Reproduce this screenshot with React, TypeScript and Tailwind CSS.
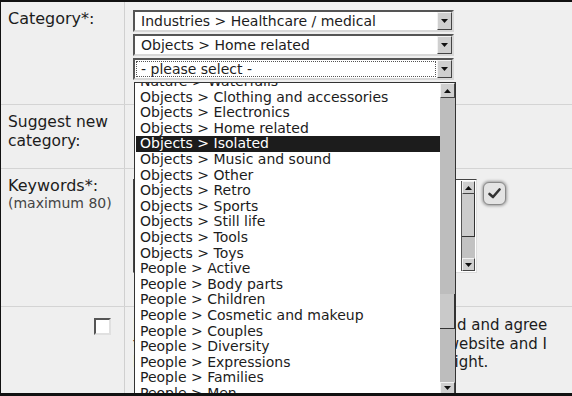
import React from 'react';

const items = [
  'Nature > Waterfalls',
  'Objects > Clothing and accessories',
  'Objects > Electronics',
  'Objects > Home related',
  'Objects > Isolated',
  'Objects > Music and sound',
  'Objects > Other',
  'Objects > Retro',
  'Objects > Sports',
  'Objects > Still life',
  'Objects > Tools',
  'Objects > Toys',
  'People > Active',
  'People > Body parts',
  'People > Children',
  'People > Cosmetic and makeup',
  'People > Couples',
  'People > Diversity',
  'People > Expressions',
  'People > Families',
  'People > Men',
  'People > Seniors',
];

const font = "font-['DejaVu_Sans','Verdana',sans-serif]";

function ArrowButton({ up = false, className = '' }: { up?: boolean; className?: string }) {
  return (
    <div
      className={`flex items-center justify-center bg-[#cfcfcf] border border-t-[#f2f2f2] border-l-[#f2f2f2] border-r-[#444] border-b-[#444] ${className}`}
    >
      <svg width="7" height="4" viewBox="0 0 7 4">
        {up ? <polygon points="0,4 7,4 3.5,0" fill="#111" /> : <polygon points="0,0 7,0 3.5,4" fill="#111" />}
      </svg>
    </div>
  );
}

function Select({ value, focused = false }: { value: string; focused?: boolean }) {
  return (
    <div className="flex h-[22px] w-[321px] border-2 border-t-[#555] border-l-[#555] border-r-[#d8d8d8] border-b-[#d8d8d8] bg-white">
      <div className="flex-1 p-[1px]">
        <div
          className={`h-full pl-[5px] text-[14px] leading-[16px] text-[#1c1c1c] whitespace-nowrap ${
            focused ? 'outline-1 outline-dotted outline-[#555] -outline-offset-1' : ''
          }`}
        >
          {value}
        </div>
      </div>
      <ArrowButton className="w-[15px] h-[18px]" />
    </div>
  );
}

function Dropdown() {
  return (
    <div className="absolute left-[133px] top-[80px] w-[322px] h-[313px] border border-[#333] bg-white flex overflow-hidden">
      <div className="flex-1 overflow-hidden pl-[1px]">
        <div className="-mt-[9px]">
          {items.map((item) => (
            <div
              key={item}
              className={`h-[15.6px] pl-[4px] text-[14px] leading-[15.6px] whitespace-nowrap ${
                item === 'Objects > Isolated' ? 'bg-[#1c1c1c] text-white' : 'text-[#1c1c1c]'
              }`}
            >
              {item}
            </div>
          ))}
        </div>
      </div>
      <div className="w-[15px] bg-[#bdbdbd] flex flex-col">
        <ArrowButton up className="h-[15px]" />
        <div className="h-[196px]" />
        <div className="h-[35px] bg-[#c9c9c9] border-r border-b border-[#333]" />
        <div className="flex-1" />
        <ArrowButton className="h-[12px]" />
      </div>
    </div>
  );
}

export default function App() {
  return (
    <div className={`relative w-[572px] h-[396px] overflow-hidden bg-[#efefef] border-t-2 border-l border-b-[3px] border-[#111] ${font} text-[#1c1c1c]`}>
      {/* Category */}
      <div className="flex h-[103px] border-b border-[#d4d4d4]">
        <div className="w-[124px] border-r border-[#d0d0d0] pl-[7px] pt-[7px] text-[16px] leading-[20px]">Category*:</div>
        <div className="flex-1 pl-[8px] pt-[8px] flex flex-col gap-[2px]">
          <Select value="Industries > Healthcare / medical" />
          <Select value="Objects > Home related" />
          <Select value="- please select -" focused />
        </div>
      </div>

      {/* Suggest */}
      <div className="flex h-[64px] border-b border-[#d4d4d4]">
        <div className="w-[124px] border-r border-[#d0d0d0] pl-[7px] pt-[8px] text-[15.5px] leading-[19px]">
          Suggest new category:
        </div>
        <div className="flex-1" />
      </div>

      {/* Keywords */}
      <div className="flex h-[138px] border-b border-[#d4d4d4]">
        <div className="w-[124px] border-r border-[#d0d0d0] pl-[7px] pt-[7px]">
          <div className="text-[16px] leading-[20px]">Keywords*:</div>
          <div className="text-[14px] leading-[15px] text-[#444]">(maximum 80)</div>
        </div>
        <div className="flex-1 pl-[8px] pt-[10px] flex items-start gap-[6px]">
          <div className="w-[344px] h-[94px] bg-white border border-t-[#444] border-l-[#444] border-r-[#ddd] border-b-[#ddd] flex justify-end">
            <div className="w-[14px] mr-[1px] mt-[1px] mb-[1px] bg-[#c2c2c2] border-l border-[#555] flex flex-col">
              <ArrowButton up className="h-[13px]" />
              <div className="h-[43px] bg-[#cccccc] border-b border-r border-[#333]" />
              <div className="flex-1" />
              <ArrowButton className="h-[13px]" />
            </div>
          </div>
          <button className="mt-[3px] w-[23px] h-[23px] rounded-[6px] bg-[#e4e4e4] border border-[#8a8a8a] shadow-[0_0_3px_1px_rgba(0,0,0,0.35)] flex items-center justify-center">
            <svg width="13" height="11" viewBox="0 0 13 11">
              <path d="M1.5 6 L5 9 L11.5 1.5" fill="none" stroke="#333" strokeWidth="2.6" strokeLinecap="round" strokeLinejoin="round" />
            </svg>
          </button>
        </div>
      </div>

      {/* Agree */}
      <div className="flex h-[86px]">
        <div className="w-[124px] border-r border-[#d0d0d0] flex justify-end pr-[13px] pt-[11px]">
          <div className="w-[17px] h-[17px] bg-white border-2 border-t-[#555] border-l-[#555] border-r-[#e0e0e0] border-b-[#e0e0e0]" />
        </div>
        <div className="flex-1 pl-[8px] pt-[9px] text-[15px] leading-[18.5px] whitespace-nowrap">
          <div>By ticking this box I confirm that I have read and agree</div>
          <div>to the usage terms and conditions of this website and I</div>
          <div>hereby confirm that I do own the full copyright.</div>
        </div>
      </div>

      <Dropdown />
    </div>
  );
}
